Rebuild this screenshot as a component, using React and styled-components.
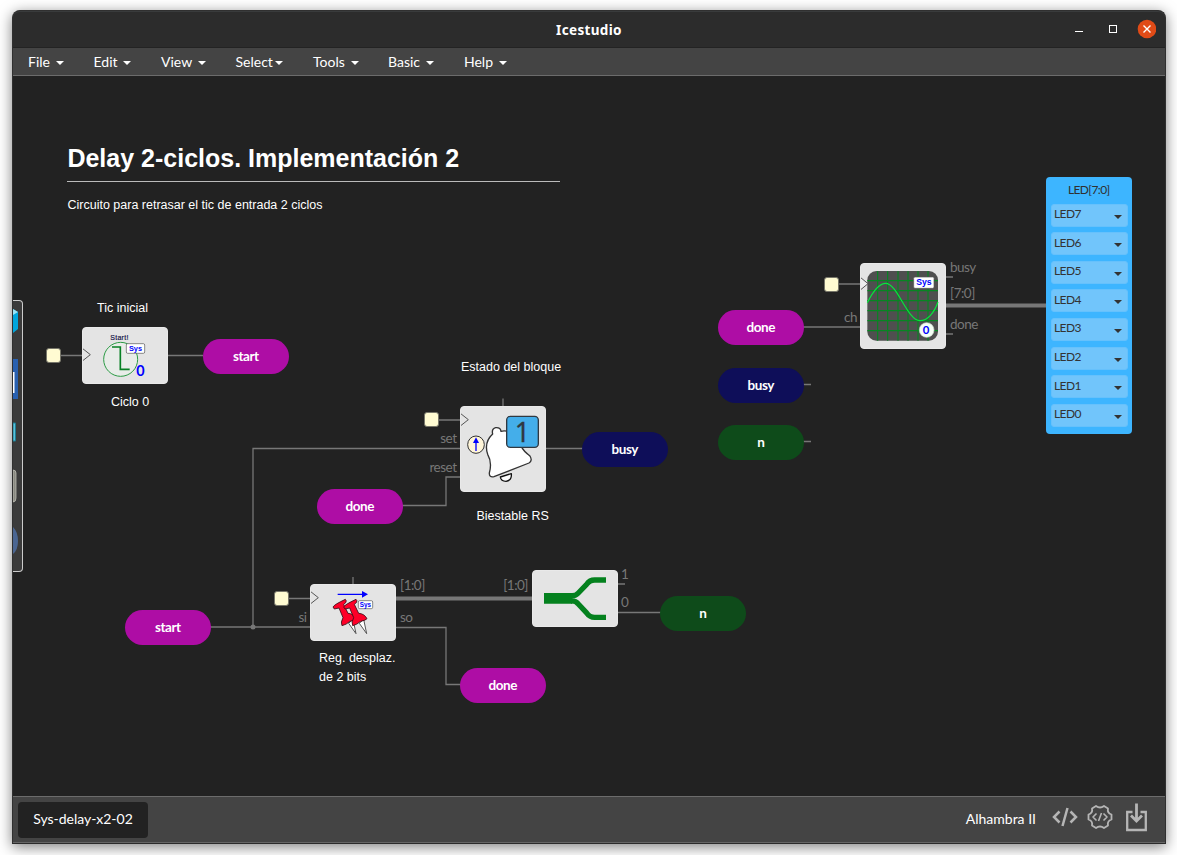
import React from "react";
import styled, { createGlobalStyle, css } from "styled-components";

const GlobalStyle = createGlobalStyle`
  * { box-sizing: border-box; }
  html, body { margin: 0; background: #fff; overflow: hidden; }
  body { font-family: Lato, "Liberation Sans", sans-serif; }
  svg { display: block; }
`;

const Desktop = styled.div`
  width: 1177px;
  height: 855px;
  padding: 10px 11px 11px 12px;
  overflow: hidden;
`;
const Window = styled.div`
  height: 834px;
  display: flex;
  flex-direction: column;
  border: 1px solid #303030;
  border-bottom-color: #2b2b2b;
  border-radius: 8px 8px 0 0;
  background: #222;
  box-shadow: 0 3px 14px rgba(0, 0, 0, 0.5);
`;
const TitleBar = styled.header`
  flex: 0 0 37px;
  display: grid;
  grid-template-columns: 1fr auto 1fr;
  align-items: center;
  background: #2c2c2c;
  border-top: 1px solid #393b3c;
  border-bottom: 1px solid #232323;
  border-radius: 7px 7px 0 0;
`;
const WindowTitle = styled.h1`
  grid-column: 2;
  margin: 0;
  padding-top: 1px;
  color: #fff;
  font: 700 13.5px/20px "Noto Sans", sans-serif;
  letter-spacing: 0.35px;
`;
const WindowButtons = styled.div`
  justify-self: end;
  display: flex;
  align-items: center;
  margin-right: 9px;
  padding-bottom: 2px;
`;
const MenuBar = styled.nav`
  flex: 0 0 28px;
  display: flex;
  background: #444;
  border-bottom: 1px solid #6c6c6c;
`;
const MenuItem = styled.a`
  width: ${(p) => p.$w}px;
  padding-left: 15px;
  display: flex;
  align-items: center;
  gap: ${(p) => (p.$tight ? 2 : 5.8)}px;
  color: #fff;
  font-size: 14px;
  line-height: 27px;
`;
const Caret = styled.i`
  border: solid transparent;
  border-width: 4px 4px 0;
  border-top-color: #fff;
  margin-top: 2px;
`;
const Canvas = styled.main`
  flex: 1;
  position: relative;
  overflow: hidden;
  background: #222;
`;
/* Panned layer: the origin of the circuit lies up and left of the viewport. */
const Board = styled.div`
  position: absolute;
  left: -13px;
  top: -76px;
  width: 1177px;
  height: 855px;
`;
const placed = css`
  position: absolute;
  left: ${(p) => p.$x}px;
  top: ${(p) => p.$y}px;
`;
const Wires = styled.svg`
  position: absolute;
  inset: 0;
  fill: none;
  stroke: #777;
  stroke-width: 1.3;
`;
const Block = styled.div`
  ${placed}
  width: 85.5px;
  height: ${(p) => p.$h}px;
  border-radius: 4px;
  background: #e4e4e4;
  border: 1px solid #e9e9e9;
  overflow: hidden;
  > svg { margin: -1px; }
`;
const Tag = styled.div`
  ${placed}
  width: 85.5px;
  height: 35.5px;
  padding-bottom: 1px;
  display: flex;
  align-items: center;
  justify-content: center;
  border-radius: 18px;
  background: ${(p) => p.$color};
  color: #fff;
  font-weight: 700;
  font-size: 13.5px;
  letter-spacing: -0.45px;
`;
const Clock = styled.div`
  ${placed}
  width: 15px;
  height: 15px;
  border: 1px solid #77766a;
  border-radius: 3px;
  background: #fffbd2;
`;
const PortLabel = styled.span`
  ${placed}
  color: #777;
  font-size: 13.5px;
  line-height: 16px;
  letter-spacing: -0.5px;
  white-space: nowrap;
  ${(p) => p.$end && "transform: translateX(-100%);"}
`;
const Note = styled.div`
  ${placed}
  color: #fff;
  font: 12.5px/19px "Liberation Sans", Arial, sans-serif;
  white-space: pre;
`;
const Heading = styled.h2`
  ${placed}
  width: 493px;
  height: 39px;
  margin: 0;
  border-bottom: 1px solid #bbb;
  color: #fff;
  font: 700 25px/30px "Liberation Sans", Arial, sans-serif;
  white-space: nowrap;
`;
const LedPanel = styled.section`
  ${placed}
  width: 85.5px;
  height: 257px;
  padding: 4px 4px 0 5px;
  display: flex;
  flex-direction: column;
  gap: 5.6px;
  border-radius: 4px;
  background: #3db5ff;
  color: #333;
  font-size: 12px;
  letter-spacing: -0.6px;
`;
const LedTitle = styled.div`
  height: 17px;
  padding-right: 1px;
  line-height: 18px;
  text-align: center;
  font-size: 12px;
  color: #303030;
`;
const LedSelect = styled.div`
  height: 23px;
  flex: none;
  padding: 0 5px 0 2px;
  display: flex;
  justify-content: space-between;
  align-items: center;
  border: 1px solid #66c1fc;
  border-radius: 3px;
  background: #71c5fb;
  line-height: 19px;
  > span { margin-top: -3px; }
  > i { border: solid transparent; border-width: 4.5px 4px 0; border-top-color: #333; margin-top: 3px; }
`;
const Palette = styled.aside`
  ${placed}
  width: 10px;
  height: 272px;
  border: 1px solid #ccc;
  border-left: 0;
  border-radius: 0 4px 4px 0;
  background: #3b3b3b;
`;
const Footer = styled.footer`
  flex: 0 0 47px;
  display: flex;
  align-items: center;
  padding: 0 16px 0 5px;
  border-top: 1px solid #6c6c6c;
  border-bottom: 1px solid #656565;
  background: #444;
  color: #fff;
  font-size: 14px;
`;
const ProjectTab = styled.div`
  width: 130px;
  height: 36px;
  border-radius: 4px;
  background: #222;
  line-height: 34px;
  text-align: center;
  margin-right: auto;
`;
const BoardName = styled.span`
  margin-right: 16px;
  line-height: 18px;
  padding-bottom: 2px;
`;
const FooterIcons = styled.div`
  display: flex;
  gap: 9px;
  align-items: center;
  padding-bottom: 5px;
  > :last-child { margin-left: 2px; }
`;

const PURPLE = "#ae0da5";
const NAVY = "#0e0e59";
const GREEN = "#0e4b1a";
const BLUE = "#0000fe";

const MENUS = [["File", 65.5], ["Edit", 67.5], ["View", 74.5], ["Select", 77.5], ["Tools", 75], ["Basic", 76], ["Help", 74]];
const TAGS = [
  ["start", 203, 338.5, PURPLE], ["done", 718, 309.5, PURPLE], ["busy", 718, 367.5, NAVY], ["n", 718, 424.5, GREEN],
  ["busy", 582, 431.5, NAVY], ["done", 317, 488.5, PURPLE], ["start", 125, 609.5, PURPLE], ["done", 460, 667.5, PURPLE],
  ["n", 660, 595.5, GREEN],
];
const CLOCKS = [[45.5, 348], [824.4, 276.5], [424.4, 412], [274.4, 591]];
const PORTS = [
  ["busy", 950, 259.4], ["[7:0]", 950, 285], ["done", 950, 316.4], ["ch", 857, 309.4, true],
  ["set", 456.5, 430.4, true], ["reset", 456.5, 459.4, true], ["si", 306.5, 609.4, true], ["so", 400, 609.4],
  ["[1:0]", 400, 577], ["[1:0]", 528, 577, true], ["1", 621, 566], ["0", 621, 594],
];
const NOTES = [
  ["Circuito para retrasar el tic de entrada 2 ciclos", 67.5, 196], ["Tic inicial", 97, 299], ["Ciclo 0", 111, 393],
  ["Estado del bloque", 461, 358], ["Biestable RS", 476.5, 507], ["Reg. desplaz.\nde 2 bits", 319, 649],
];

const Sys = ({ x, y, w, h, size }) => (
  <g>
    <rect x={x} y={y} width={w} height={h} rx="4" fill="#fff" stroke="#555" strokeWidth="2" />
    <text x={x + w / 2} y={y + h / 2 + size * 0.3} textAnchor="middle" fontFamily="Liberation Sans" fontWeight="700" fontSize={size} fill={BLUE}>Sys</text>
  </g>
);
const ClockEdge = ({ x, y }) => (
  <path d={`M${x} ${y - 19}l24 19-24 19`} fill="none" stroke="#555" strokeWidth="3" />
);

const StartArt = () => (
  <svg width="86" height="57" viewBox="246 111 258 171">
    <ClockEdge x={247} y={194} />
    <circle cx="362" cy="208" r="51" fill="#e8ece8" stroke="#2c9b45" strokeWidth="3" />
    <path d="M336 171h25v67h28" fill="none" stroke="#078023" strokeWidth="5" />
    <text x="331" y="150" fontFamily="Liberation Sans" fontSize="21" fill="#111144" stroke="#111144" strokeWidth=".5" textLength="54">Start!</text>
    <Sys x={379} y={161} w={55} h={29} size={22} />
    <text x="409" y="257" fontFamily="Lato" fontWeight="700" fontSize="46" fill={BLUE} textLength="25" lengthAdjust="spacingAndGlyphs">0</text>
  </svg>
);
const BellArt = () => (
  <svg width="86" height="86" viewBox="150 168 258 258">
    <ClockEdge x={151} y={209} />
    <g stroke="#333" strokeWidth="4" strokeLinejoin="round" fill="#fff">
      <path d="M271 381Q273 394 288 394Q306 392 304 371Z" stroke="#111" />
      <path d="M248 252Q244 237 257 233Q272 232 273 244Q290 240 305 250Q326 265 334 290Q341 304 359 317Q369 331 357 339L252 380Q237 383 238 369Q247 337 233 313Q221 277 248 252Z" />
    </g>
    <rect x="290" y="199" width="95" height="93" rx="11" fill="#44aeea" stroke="#303840" strokeWidth="4" />
    <text x="337" y="275" textAnchor="middle" fontFamily="Noto Sans" fontSize="80" fill="#303840" stroke="#303840">1</text>
    <ellipse cx="198" cy="284" rx="25" ry="26" fill="#fff5d8" stroke="#333" strokeWidth="3" />
    <path d="M198 303V270" stroke={BLUE} strokeWidth="4" />
    <path d="M198 262l9 17h-18Z" fill={BLUE} />
  </svg>
);
const Pin = ({ dx }) => (
  <g transform={`translate(${dx} 0)`} strokeLinejoin="round">
    <path d="M266 190l22 31-9-43Z" fill="#fff" stroke="#555" strokeWidth="3" />
    <path d="M219 141Q222 134 256 118Q260 121 258 127L251 133L264 160Q281 161 289 176Q285 181 270 184Q259 194 246 197Q241 187 249 173L237 144L223 147Z" fill="#fe0028" stroke="#331018" strokeWidth="2.5" />
  </g>
);
const PinsArt = () => (
  <svg width="86" height="57" viewBox="150 72 258 171">
    <ClockEdge x={151} y={113} />
    <path d="M233 103h76" stroke={BLUE} strokeWidth="4" />
    <path d="M306 93l18 10-18 10Z" fill={BLUE} />
    <Pin dx={0} />
    <Pin dx={32} />
    <Sys x={295} y={122} w={43} h={24} size={19} />
  </svg>
);
const SplitArt = () => (
  <svg width="86" height="57" viewBox="96 60 258 171">
    <g fill="none" stroke="#04811e" strokeWidth="16">
      <path d="M132 145H217" strokeWidth="32" />
      <path d="M212 137Q226 139 235 129L260 103Q269 90 284 90H318" />
      <path d="M212 153Q226 151 235 162L260 189Q269 202 284 202H318" />
    </g>
  </svg>
);
const ScopeArt = () => (
  <svg width="86" height="86" viewBox="480 39 258 258">
    <rect x="502" y="63" width="212" height="209" rx="27" fill="#4f4f4f" />
    <path d="M533 63v209M563 63v209M594 63v209M624 63v209M654 63v209M684 63v209M502 92h212M502 122h212M502 152h212M502 182h212M502 212h212M502 242h212" stroke="#078522" strokeWidth="3.5" />
    <path d="M502 158C522 118 540 100 557 100C592 100 622 212 660 212C682 212 702 190 714 156" fill="none" stroke="#05e83c" strokeWidth="3.5" />
    <path d="M481 82l23 19-23 19Z" fill="#eee" stroke="#555" strokeWidth="3" />
    <Sys x={641} y={81} w={61} h={34} size={26} />
    <circle cx="680" cy="240" r="22" fill="#f5fff5" stroke="#ccd8cc" strokeWidth="2" />
    <text x="678" y="252" textAnchor="middle" fontFamily="Lato" fontWeight="700" fontSize="34" fill={BLUE}>0</text>
  </svg>
);

export default function App() {
  return (
    <Desktop>
      <GlobalStyle />
      <Window>
        <TitleBar>
          <WindowTitle>Icestudio</WindowTitle>
          <WindowButtons>
            <svg width="82" height="20" viewBox="0 0 82 20" fill="none">
              <path d="M1 12.5h8" stroke="#fff" />
              <rect x="35.5" y="6.5" width="7" height="7" stroke="#fff" />
              <circle cx="73" cy="10" r="9.3" fill="#e04b17" />
              <path d="M69.5 6.5l7 7m0-7l-7 7" stroke="#fff" strokeWidth="1.4" />
            </svg>
          </WindowButtons>
        </TitleBar>
        <MenuBar>
          {MENUS.map(([label, w]) => (
            <MenuItem key={label} $w={w} $tight={label === "Select"}>{label}<Caret /></MenuItem>
          ))}
        </MenuBar>
        <Canvas>
          <Board>
            <Wires width="1177" height="855">
              <path d="M60 355.5H82M167 355.5H203M838 284H861M803 327H861M803 384.5H811M803 441.5H811M945 277H953M945 334H953M439 420H461M503 398.5V407M545 448.5H583M210 627H311M253 627V448.5H461M402 505.5H446V477H461M288 598.5H311M353 577V585M395 627.5H446V684.5H461M617 584H625M617 612.5H661" />
              <path d="M945 305.5H1047M395 598.5H533" strokeWidth="4" />
              <circle cx="253" cy="627" r="2.5" fill="#777" stroke="none" />
            </Wires>
            <Heading $x={67.4} $y={143}>Delay 2-ciclos. Implementación 2</Heading>
            {NOTES.map(([t, x, y]) => <Note key={t} $x={x} $y={y}>{t}</Note>)}
            {PORTS.map(([t, x, y, end], i) => <PortLabel key={i} $x={x} $y={y} $end={end}>{t}</PortLabel>)}
            {CLOCKS.map(([x, y]) => <Clock key={x} $x={x} $y={y} />)}
            {TAGS.map(([t, x, y, c], i) => <Tag key={i} $x={x} $y={y} $color={c}>{t}</Tag>)}
            <Block $x={82} $y={327} $h={57}><StartArt /></Block>
            <Block $x={460} $y={406} $h={86}><BellArt /></Block>
            <Block $x={310} $y={584} $h={57}><PinsArt /></Block>
            <Block $x={532} $y={570} $h={57}><SplitArt /></Block>
            <Block $x={860} $y={263} $h={86}><ScopeArt /></Block>
            <LedPanel $x={1046} $y={177}>
              <LedTitle>LED[7:0]</LedTitle>
              {[7, 6, 5, 4, 3, 2, 1, 0].map((n) => <LedSelect key={n}><span>LED{n}</span><i /></LedSelect>)}
            </LedPanel>
            <Palette $x={13} $y={300}>
              <svg width="6" height="270" viewBox="13 301 6 270">
                <path d="M13 309l5 3v17l-5 4Z" fill="#00a5dc" />
                <path d="M13 309l5 3-5 3Z" fill="#9be4f7" />
                <path d="M13 359h5v40h-5Z" fill="#2860b0" />
                <path d="M13 372h1.5v21H13Z" fill="#fff" />
                <path d="M13 423h2.5v18H13Z" fill="#5bc0d8" stroke="#1c7c93" />
                <path d="M13 470q3 0 3 3v25q0 4-3 4Z" fill="#888880" stroke="#c8c8c0" strokeWidth=".7" />
                <path d="M13 527q5 5 5 14t-5 13Z" fill="#4b6692" />
              </svg>
            </Palette>
          </Board>
        </Canvas>
        <Footer>
          <ProjectTab>Sys-delay-x2-02</ProjectTab>
          <BoardName>Alhambra II</BoardName>
          <FooterIcons>
            <svg width="26" height="20" viewBox="0 0 26 20" fill="none" stroke="#b5b5b5" strokeWidth="2.5">
              <path d="M7.5 4.5L2 10l5.5 5.5M18.5 4.5L24 10l-5.5 5.5M15.5 1L10.5 19" />
            </svg>
            <svg width="26" height="26" viewBox="0 0 26 26" fill="none" stroke="#b5b5b5" strokeWidth="1.8" strokeLinejoin="round">
              <path d="M9 2Q13 5 17 2L21 4.5Q20 9 24.5 10.5V15.5Q20 17 21 21.5L17 24Q13 21 9 24L5 21.5Q6 17 1.5 15.5V10.5Q6 9 5 4.5Z" />
              <path d="M9.5 9.5L6 13l3.5 3.5M16.5 9.5L20 13l-3.5 3.5M14.5 9l-3 8" strokeWidth="1.6" />
            </svg>
            <svg width="25" height="30" viewBox="0 0 25 30" fill="none" stroke="#b5b5b5" strokeWidth="2.3">
              <path d="M8.5 10H3.2v18h18.6V10h-5.3" />
              <path d="M12.5 1.5v17M7 13.5l5.5 5.5 5.5-5.5" strokeWidth="2.8" />
            </svg>
          </FooterIcons>
        </Footer>
      </Window>
    </Desktop>
  );
}
